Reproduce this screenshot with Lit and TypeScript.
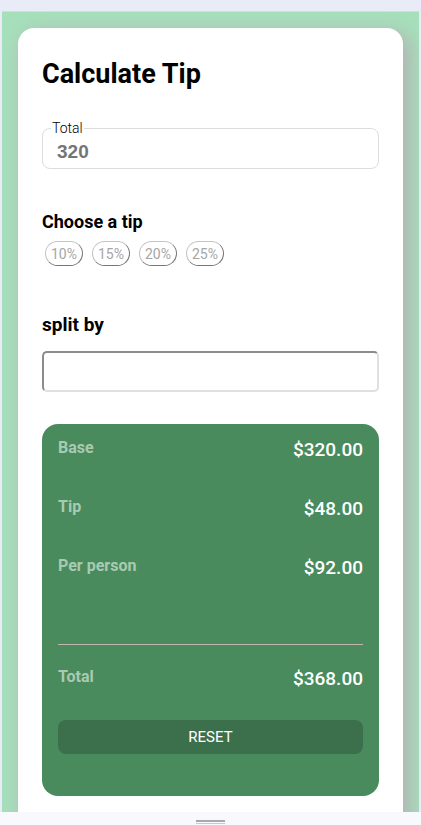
import { LitElement, html, css } from "lit";
import { customElement, state } from "lit/decorators.js";

const money = (n: number) => "$" + n.toFixed(2);

@customElement("app-root")
export class AppRoot extends LitElement {
  static styles = css`
    :host {
      display: flex;
      flex-direction: column;
      height: 100vh;
      box-sizing: border-box;
      padding-top: 11px;
      background: #e9ecf6;
      font-family: Roboto, "Liberation Sans", sans-serif;
      color: #000;
    }
    * {
      box-sizing: border-box;
    }
    .viewport {
      flex: 1;
      min-height: 0;
      overflow: hidden;
      margin: 0 2px;
      border-top: 1px solid #d4dddd;
      padding: 16px;
      background: #a6e0bb;
    }
    .card {
      background: #fff;
      border-radius: 16px;
      padding: 24px 24px 32px;
      box-shadow: 6px 6px 20px 2px #b3b3b3;
    }
    h1 {
      margin: 0;
      font-size: 27px;
      line-height: 44px;
      font-weight: 700;
    }
    h2 {
      margin: 0;
      font-size: 18px;
      line-height: 24px;
      font-weight: 700;
    }
    .total {
      margin: 24px 0 0;
      padding: 0 12px;
      height: 49px;
      min-width: 0;
      border: 1px solid #ddd;
      border-radius: 8px;
    }
    .total legend {
      margin-left: -4px;
      padding: 0 1px;
      font-size: 14px;
      line-height: 16px;
      font-weight: 300;
    }
    .total input {
      display: block;
      width: 100%;
      height: 32px;
      border: 0;
      padding: 0 2px;
      background: none;
      font: bold 19px "Liberation Sans", sans-serif;
      outline: none;
    }
    .total input::placeholder {
      color: #757575;
      opacity: 1;
    }
    .tips {
      margin-top: 41px;
    }
    .chips {
      display: flex;
      gap: 9px;
      margin-top: 7px;
      padding-left: 3px;
    }
    .chip {
      width: 38px;
      height: 25px;
      padding: 0;
      border: 1px solid;
      border-color: #c4c4c4 #767676 #767676 #c4c4c4;
      border-radius: 13px;
      background: #fff;
      color: #a6a6a6;
      font: 14px Roboto, sans-serif;
    }
    .split {
      display: block;
      margin-top: 47px;
    }
    .split h2 {
      font-size: 19px;
    }
    .split input {
      display: block;
      width: 100%;
      height: 41px;
      margin-top: 14px;
      padding: 0 12px;
      border: 2px solid;
      border-color: #8d8b8b #e3dfdf #e3dfdf #8d8b8b;
      border-radius: 5px;
      font: bold 19px "Liberation Sans", sans-serif;
    }
    .summary {
      margin-top: 32px;
      padding: 8px 16px 42px;
      border-radius: 16px;
      background: #498b5d;
    }
    dl {
      margin: 0;
    }
    .row {
      display: flex;
      justify-content: space-between;
      height: 59px;
    }
    dt {
      font-size: 16px;
      line-height: 32px;
      font-weight: 700;
      color: #a9cab2;
    }
    dd {
      margin: 0;
      font-size: 19px;
      line-height: 35px;
      font-weight: 500;
      color: #fff;
    }
    .sum {
      margin-top: 35px;
      padding-top: 16px;
      border-top: 1px solid #c0b4b0;
      height: 76px;
    }
    .reset {
      display: block;
      width: 100%;
      height: 34px;
      padding: 0;
      border: 0;
      border-radius: 8px;
      background: #3c6f4b;
      color: #fff;
      font: 15px Roboto, sans-serif;
    }
    .grip {
      display: flex;
      justify-content: center;
      height: 13px;
      padding-top: 8px;
      background: #f8f9fd;
    }
    .bars {
      width: 29px;
      height: 4px;
      border-top: 2px solid #a9a9ac;
      border-bottom: 1px solid #c9c9cc;
    }
  `;

  @state() private base = 320;
  @state() private rate = 15;
  @state() private people = 4;

  private reset() {
    this.base = 0;
    this.rate = 0;
    this.people = 1;
  }

  render() {
    const tip = (this.base * this.rate) / 100;
    const total = this.base + tip;
    return html`
      <main class="viewport">
        <section class="card">
          <h1>Calculate Tip</h1>
          <fieldset class="total">
            <legend><label for="total">Total</label></legend>
            <input
              id="total"
              inputmode="decimal"
              placeholder="320"
              @change=${(e: Event) =>
                (this.base = Number((e.target as HTMLInputElement).value) || 0)}
            />
          </fieldset>
          <div class="tips">
            <h2>Choose a tip</h2>
            <div class="chips">
              ${[10, 15, 20, 25].map(
                (r) => html`<button class="chip" type="button" @click=${() => (this.rate = r)}>${r}%</button>`
              )}
            </div>
          </div>
          <div class="split">
            <h2><label for="split">split by</label></h2>
            <input
              id="split"
              inputmode="numeric"
              @change=${(e: Event) =>
                (this.people = Number((e.target as HTMLInputElement).value) || 1)}
            />
          </div>
          <div class="summary">
            <dl>
              <div class="row"><dt>Base</dt><dd>${money(this.base)}</dd></div>
              <div class="row"><dt>Tip</dt><dd>${money(tip)}</dd></div>
              <div class="row"><dt>Per person</dt><dd>${money(total / this.people)}</dd></div>
              <div class="row sum"><dt>Total</dt><dd>${money(total)}</dd></div>
            </dl>
            <button class="reset" type="button" @click=${this.reset}>RESET</button>
          </div>
        </section>
      </main>
      <div class="grip"><div class="bars"></div></div>
    `;
  }
}
